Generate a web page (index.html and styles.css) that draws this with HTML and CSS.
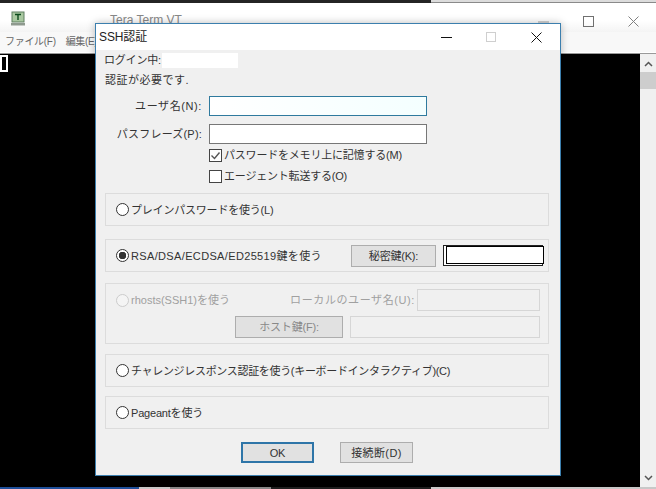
FILE: index.html
```html
<!DOCTYPE html>
<html lang="ja">
<head>
<meta charset="utf-8">
<title>Tera Term VT</title>
<link rel="stylesheet" href="styles.css">
</head>
<body>
<div class="topstrip"><span class="ts-dark"></span><span class="ts-gray"></span></div>
<header class="appbar">
  <div class="apptitle">
    <svg class="appicon" viewBox="0 0 16 16" width="16" height="16"><rect x="2" y="1" width="12" height="10" fill="#a9c8a0" stroke="#5f7f60"/><path d="M5 3.5h6M8 3.5v5.5" stroke="#0c4a1c" stroke-width="1.4" fill="none"/><rect x="1" y="12" width="14" height="2.5" fill="#8f9a8f"/></svg>
    <span class="apptext">Tera Term VT</span>
    <div class="wincontrols">
      <svg viewBox="0 0 11 11" width="11" height="11"><path d="M0 6h11" stroke="#a5a5a5"/></svg>
      <svg viewBox="0 0 11 11" width="11" height="11"><rect x=".5" y=".5" width="10" height="10" fill="none" stroke="#707070"/></svg>
      <svg viewBox="0 0 11 11" width="11" height="11"><path d="M.5.5l10 10M10.5.5l-10 10" stroke="#808080" fill="none"/></svg>
    </div>
  </div>
  <nav class="menubar"><span>ファイル(F)</span><span>編集(E)</span></nav>
</header>
<main class="terminal">
  <div class="screen"><span class="cursor"></span></div>
  <div class="scrollbar">
    <svg viewBox="0 0 9 6" width="9" height="6"><path d="M1 5l3.5-3.5L8 5" fill="none" stroke="#555" stroke-width="1.5"/></svg>
    <span class="thumb"></span>
    <svg class="arrowdown" viewBox="0 0 9 6" width="9" height="6"><path d="M1 1l3.5 3.5L8 1" fill="none" stroke="#555" stroke-width="1.5"/></svg>
  </div>
</main>
<div class="bottomstrip"><span class="bs-blue"></span><span class="bs-light"></span><span class="bs-gray"></span><span class="bs-dark"></span><span class="bs-rest"></span></div>

<section class="dialog">
  <div class="dlgtitle">
    <span class="dlgtext">SSH認証</span>
    <div class="dlgcontrols">
      <svg viewBox="0 0 11 11" width="11" height="11"><path d="M0 5.5h11" stroke="#111"/></svg>
      <svg viewBox="0 0 11 11" width="11" height="11"><rect x=".5" y=".5" width="9" height="9" fill="none" stroke="#cfcfcf"/></svg>
      <svg viewBox="0 0 11 11" width="11" height="11"><path d="M.5.5l10 10M10.5.5l-10 10" stroke="#111" fill="none"/></svg>
    </div>
  </div>
  <div class="dlgbody">
    <div class="loginrow"><span class="logintext">ログイン中:</span><span class="blank"></span></div>
    <div class="note">認証が必要です.</div>
    <div class="field first"><label class="userlabel">ユーザ名(N):</label><span class="input focused"></span></div>
    <div class="field"><label>パスフレーズ(P):</label><span class="input"></span></div>
    <div class="check c1">
      <svg class="box" viewBox="0 0 13 13" width="13" height="13"><rect x=".5" y=".5" width="12" height="12" fill="#fff" stroke="#444"/><path d="M2.5 6.5l3 3 5-6" fill="none" stroke="#555" stroke-width="1.4"/></svg>
      <span>パスワードをメモリ上に記憶する(M)</span>
    </div>
    <div class="check c2">
      <svg class="box" viewBox="0 0 13 13" width="13" height="13"><rect x=".5" y=".5" width="12" height="12" fill="#fff" stroke="#444"/></svg>
      <span>エージェント転送する(O)</span>
    </div>

    <div class="group g1"><span class="radio"></span><span>プレインパスワードを使う(L)</span></div>
    <div class="group g2">
      <span class="radio on"></span><span class="grow keylabel">RSA/DSA/ECDSA/ED25519鍵を使う</span>
      <span class="btn keybtn">秘密鍵(K):</span>
      <span class="keybox"><span class="keyinner"></span></span>
    </div>
    <div class="group g3">
      <div class="g3row">
        <span class="radio dis"></span><span class="dimtext grow rhosts">rhosts(SSH1)を使う</span>
        <span class="dimtext spaced">ローカルのユーザ名(U):</span><span class="input dis localuser"></span>
      </div>
      <div class="g3row second">
        <span class="btn hostbtn">ホスト鍵(F):</span><span class="input dis hostkey"></span>
      </div>
    </div>
    <div class="group g4"><span class="radio"></span><span class="tight">チャレンジレスポンス認証を使う(キーボードインタラクティブ)(C)</span></div>
    <div class="group g5"><span class="radio"></span><span>Pageantを使う</span></div>
    <div class="actions">
      <span class="btn action default">OK</span>
      <span class="btn action wide">接続断(D)</span>
    </div>
  </div>
</section>
</body>
</html>
```

FILE: styles.css
```css
* { box-sizing: border-box; }
html, body { margin: 0; padding: 0; }
body {
  width: 656px; height: 489px; overflow: hidden; background: #000;
  display: flex; flex-direction: column; position: relative;
  font-family: "Liberation Sans", "Noto Sans CJK JP", sans-serif;
  font-size: 11px; line-height: 16px; color: #333; letter-spacing: -.2px;
}
.topstrip { height: 3px; display: flex; flex: none; }
.ts-dark { width: 431px; background: #242424; }
.ts-gray { flex: 1; background: linear-gradient(#dcdcdc, #dcdcdc 66%, #8a8a8a 66%); }

.appbar { height: 51px; flex: none; background: #fff; border-bottom: 1px solid #999; display: flex; flex-direction: column; }
.apptitle { height: 29px; display: flex; align-items: center; padding-left: 10px; background: linear-gradient(#fff 60%, #f4f4f4); }
.appicon { margin-top: 3px; }
.apptext { margin-left: 84px; margin-top: 4px; font-size: 12px; color: #888; letter-spacing: 0; }
.wincontrols { margin-left: auto; margin-right: 17px; display: flex; gap: 34px; margin-top: 7px; }
.menubar { height: 20px; display: flex; gap: 10px; padding-left: 5px; align-items: center; color: #666; background: #f8f8f8; font-size: 10px; letter-spacing: -.3px; }

.terminal { flex: 1; display: flex; min-height: 0; }
.screen { flex: 1; background: #000; padding-top: 1px; }
.cursor { display: block; width: 8px; height: 17px; border: 2px solid #fff; background: #000; }
.scrollbar { width: 16px; background: #f0f0f0; display: flex; flex-direction: column; align-items: center; padding: 7px 0 6px; }
.thumb { width: 16px; height: 17px; background: #cdcdcd; margin-top: 5px; }
.arrowdown { margin-top: auto; }

.bottomstrip { height: 2px; flex: none; display: flex; }
.bs-blue { width: 139px; background: #1f4f9a; }
.bs-light { width: 31px; background: #c8c8c8; }
.bs-gray { width: 101px; background: #888; }
.bs-dark { width: 160px; background: #1e1e1e; }
.bs-rest { flex: 1; background: #c8c8c8; }

.dialog {
  position: absolute; left: 95px; top: 23px; width: 466px; height: 453px;
  border: 1px solid #3c7fae; background: #f0f0f0;
  box-shadow: 0 0 8px rgba(0,0,0,.25);
  display: flex; flex-direction: column;
}
.dlgtitle { height: 26px; flex: none; background: #fff; display: flex; align-items: center; padding-left: 3px; }
.dlgtext { font-size: 12px; color: #222; letter-spacing: -.1px; }
.dlgcontrols { margin-left: auto; margin-right: 18px; display: flex; gap: 34px; }

.dlgbody { flex: 1; padding: 3px 12px 0 9px; display: flex; flex-direction: column; }
.loginrow { display: flex; height: 15px; align-items: center; margin-left: -1px; }
.logintext { margin-top: -1px; }
.blank { width: 76px; height: 15px; background: #fff; margin-left: 1px; }
.note { margin-top: 4px; height: 16px; letter-spacing: .5px; }
.field { display: flex; align-items: center; height: 20px; margin-top: 8px; }
.field label { width: 97px; text-align: right; margin-right: 7px; letter-spacing: .2px; }
.field .userlabel { letter-spacing: .6px; }
.input { display: block; width: 218px; height: 20px; border: 1px solid #777; background: #fff; }
.input.focused { border-color: #2f7a9e; background: linear-gradient(90deg, #fff, #f4ffff); }
.check { display: flex; align-items: center; height: 16px; margin-left: 104px; gap: 2px; }
.box { flex: none; }
.check.c1 { margin-top: 3px; }
.check.c2 { margin-top: 5px; }

.group { border: 1px solid #dcdcdc; width: 444px; display: flex; align-items: center; padding: 0 5px 0 10px; flex: none; height: 33px; }
.grow { flex: 1; }
.keylabel { letter-spacing: .35px; }
.tight { letter-spacing: -.32px; }
.rhosts { letter-spacing: 0; }
.g1 { margin-top: 9px; }
.g2 { margin-top: 13px; }
.g3 { margin-top: 11px; height: 61px; display: block; padding: 5px 8px 0 10px; }
.g4 { margin-top: 10px; }
.g5 { margin-top: 9px; }
.radio { width: 13px; height: 13px; border-radius: 50%; border: 1px solid #333; background: #fff; margin-right: 2px; flex: none; }
.radio.on { background: radial-gradient(circle, #333 0, #333 3.5px, #fff 4px); }
.radio.dis { border-color: #ccc; background: #f4f4f4; }
.dimtext { color: #a0a0a0; }
.spaced { letter-spacing: .6px; }
.g3row { display: flex; align-items: center; height: 22px; }
.g3row.second { margin-top: 5px; padding-left: 119px; }
.localuser { width: 123px; height: 22px; margin-left: 2px; }
.input.dis { border-color: #d6d6d6; background: #f0f0f0; }
.hostbtn { width: 108px; height: 22px; background: #c8c8c8; color: #888; border: none; }
.hostkey { width: 191px; height: 22px; margin-left: 7px; }
.btn { display: flex; align-items: center; justify-content: center; background: #e1e1e1; border: 1px solid #adadad; flex: none; }
.keybtn { width: 85px; height: 22px; }
.keybox { width: 100px; height: 21px; margin-left: 7px; border: 1px solid #222; background: #fff; flex: none; }
.keyinner { display: block; margin: 0 0 0 2px; width: 98px; height: 18px; border: 1px solid #000; background: #fff; }
.actions { display: flex; height: 21px; gap: 26px; margin-top: 13px; padding-left: 136px; }
.action { width: 73px; height: 21px; }
.wide { letter-spacing: .4px; }
.default { border: 2px solid #2e75a8; }
```
